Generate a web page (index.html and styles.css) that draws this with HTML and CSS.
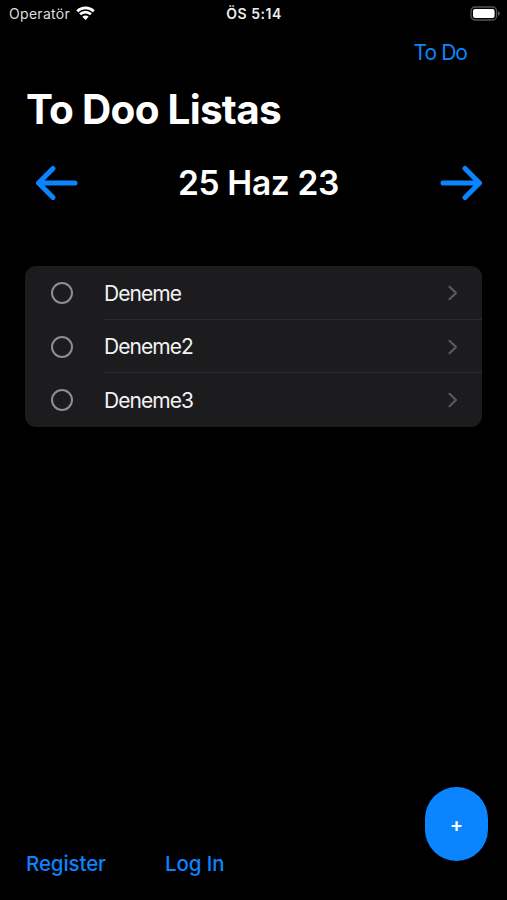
FILE: index.html
```html
<!DOCTYPE html>
<html lang="tr">
<head>
    <meta charset="UTF-8">
    <meta name="viewport" content="width=device-width, initial-scale=1.0">
    <title>To Doo Listas</title>
    <link rel="stylesheet" href="styles.css">
</head>
<body>
    <div class="wrapper">
        <div class="status">
            <div class="carrier">
                <span>Operatör</span>
                <svg class="wifi" width="19" height="15" viewBox="0 0 19 15">
                    <path d="M1.2 5.2a12 12 0 0 1 16.6 0M4.1 8.3a7.8 7.8 0 0 1 10.8 0"/>
                    <path class="dot" d="M6.3 10.8a4.6 4.6 0 0 1 6.4 0L9.5 14z"/>
                </svg>
            </div>
            <div class="time">ÖS 5:14</div>
            <svg class="battery" width="31" height="15" viewBox="0 0 31 15">
                <rect class="shell" x="1" y="1" width="25.6" height="13" rx="4"/>
                <rect class="level" x="3" y="3" width="21.6" height="9" rx="2"/>
                <path class="cap" d="M28 5.2v4.6q2-.8 2-2.3t-2-2.3z"/>
            </svg>
        </div>
        <div class="nav"><a class="todo">To Do</a></div>
        <h1 class="title">To Doo Listas</h1>
        <div class="datebar">
            <svg class="arrow" width="44" height="38" viewBox="0 0 44 38">
                <path d="M41 19H4.5M19 4.5L4.5 19L19 33.500"/>
            </svg>
            <h2 class="date">25 Haz 23</h2>
            <svg class="arrow" width="44" height="38" viewBox="0 0 44 38">
                <path d="M4 19H40.500M26 4.500L40.500 19L26 33.500"/>
            </svg>
        </div>
        <ul class="list">
            <li>
                <span class="check"></span>
                <div class="item">
                    <span>Deneme</span>
                    <svg width="12" height="18" viewBox="0 0 12 18"><path d="M2.500 2.800L9 9l-6.500 6.200"/></svg>
                </div>
            </li>
            <li>
                <span class="check"></span>
                <div class="item">
                    <span>Deneme2</span>
                    <svg width="12" height="18" viewBox="0 0 12 18"><path d="M2.500 2.800L9 9l-6.500 6.200"/></svg>
                </div>
            </li>
            <li>
                <span class="check"></span>
                <div class="item">
                    <span>Deneme3</span>
                    <svg width="12" height="18" viewBox="0 0 12 18"><path d="M2.500 2.800L9 9l-6.500 6.200"/></svg>
                </div>
            </li>
        </ul>
        <div class="footer">
            <a class="register">Register</a>
            <a class="login">Log In</a>
        </div>
        <div class="add">+</div>
    </div>
</body>
</html>
```
FILE: styles.css
```css
*{
    margin: 0;
    padding: 0;
    list-style: none;
    box-sizing: border-box;
}
body{
    background-color: #000;
    font-family: Inter, "Liberation Sans", sans-serif;
    color: #fff;
}
.wrapper{
    position: relative;
    display: flex;
    flex-direction: column;
    height: 900px;
    overflow: hidden;
}
.status{
    display: grid;
    grid-template-columns: 1fr auto 1fr;
    align-items: center;
    height: 27px;
    padding: 0 6px 0 9px;
    font-size: 14px;
}
.carrier{
    display: flex;
    align-items: center;
    gap: 6px;
    letter-spacing: 0.3px;
    color: #ddd;
}
.wifi{
    fill: none;
    stroke: #fff;
    stroke-width: 2.7;
}
.wifi .dot{
    fill: #fff;
    stroke: none;
}
.time{
    padding-right: 2px;
    font-weight: 600;
    letter-spacing: 0.5px;
    color: #eee;
}
.battery{
    justify-self: end;
}
.battery .shell{
    fill: none;
    stroke: #555;
    stroke-width: 1.3;
}
.battery .level{
    fill: #fff;
}
.battery .cap{
    fill: #555;
}
.nav{
    display: flex;
    justify-content: flex-end;
    height: 50px;
    padding-right: 40px;
    line-height: 52px;
}
.todo{
    font-size: 21px;
    letter-spacing: -0.95px;
    color: #0a84ff;
}
.title{
    height: 62px;
    padding-left: 26px;
    line-height: 65px;
    font-size: 40.5px;
    font-weight: 700;
    letter-spacing: -0.75px;
}
.datebar{
    display: flex;
    justify-content: space-between;
    align-items: center;
    height: 88px;
    padding: 0 24px 0 34px;
}
.arrow{
    fill: none;
    stroke: #0a84ff;
    stroke-width: 5;
    stroke-linecap: round;
    stroke-linejoin: round;
}
.date{
    font-size: 33.5px;
    font-weight: 600;
    letter-spacing: -0.35px;
}
.list{
    margin: 39px 25px 0;
    border-radius: 11px;
    background-color: #1c1c1e;
    overflow: hidden;
}
.list li{
    display: flex;
    align-items: center;
    height: 53.7px;
    padding-left: 26px;
}
.check{
    width: 22px;
    height: 22px;
    border: 2px solid #8e8e92;
    border-radius: 50%;
}
.item{
    flex: 1;
    display: flex;
    justify-content: space-between;
    align-items: center;
    height: 100%;
    margin-left: 31px;
    padding: 1.4px 23px 0 0;
    border-bottom: 1px solid #2c2c2f;
    font-size: 21px;
    letter-spacing: -0.95px;
    color: #f2f2f2;
}
.list li:last-child .item{
    padding-top: 0;
    border-bottom: none;
}
.item svg{
    fill: none;
    stroke: #5a5a5e;
    stroke-width: 2.2;
    stroke-linecap: round;
    stroke-linejoin: round;
}
.footer{
    display: flex;
    gap: 59px;
    margin-top: auto;
    height: 74px;
    padding-left: 26px;
    line-height: 76px;
    font-size: 20.5px;
    font-weight: 500;
    letter-spacing: -0.1px;
    color: #0a84ff;
}
.add{
    position: absolute;
    right: 19px;
    bottom: 39px;
    width: 63px;
    height: 74px;
    border-radius: 31.5px;
    background-color: #0a84ff;
    line-height: 76px;
    text-align: center;
    font-size: 20px;
    font-weight: 600;
}
```
